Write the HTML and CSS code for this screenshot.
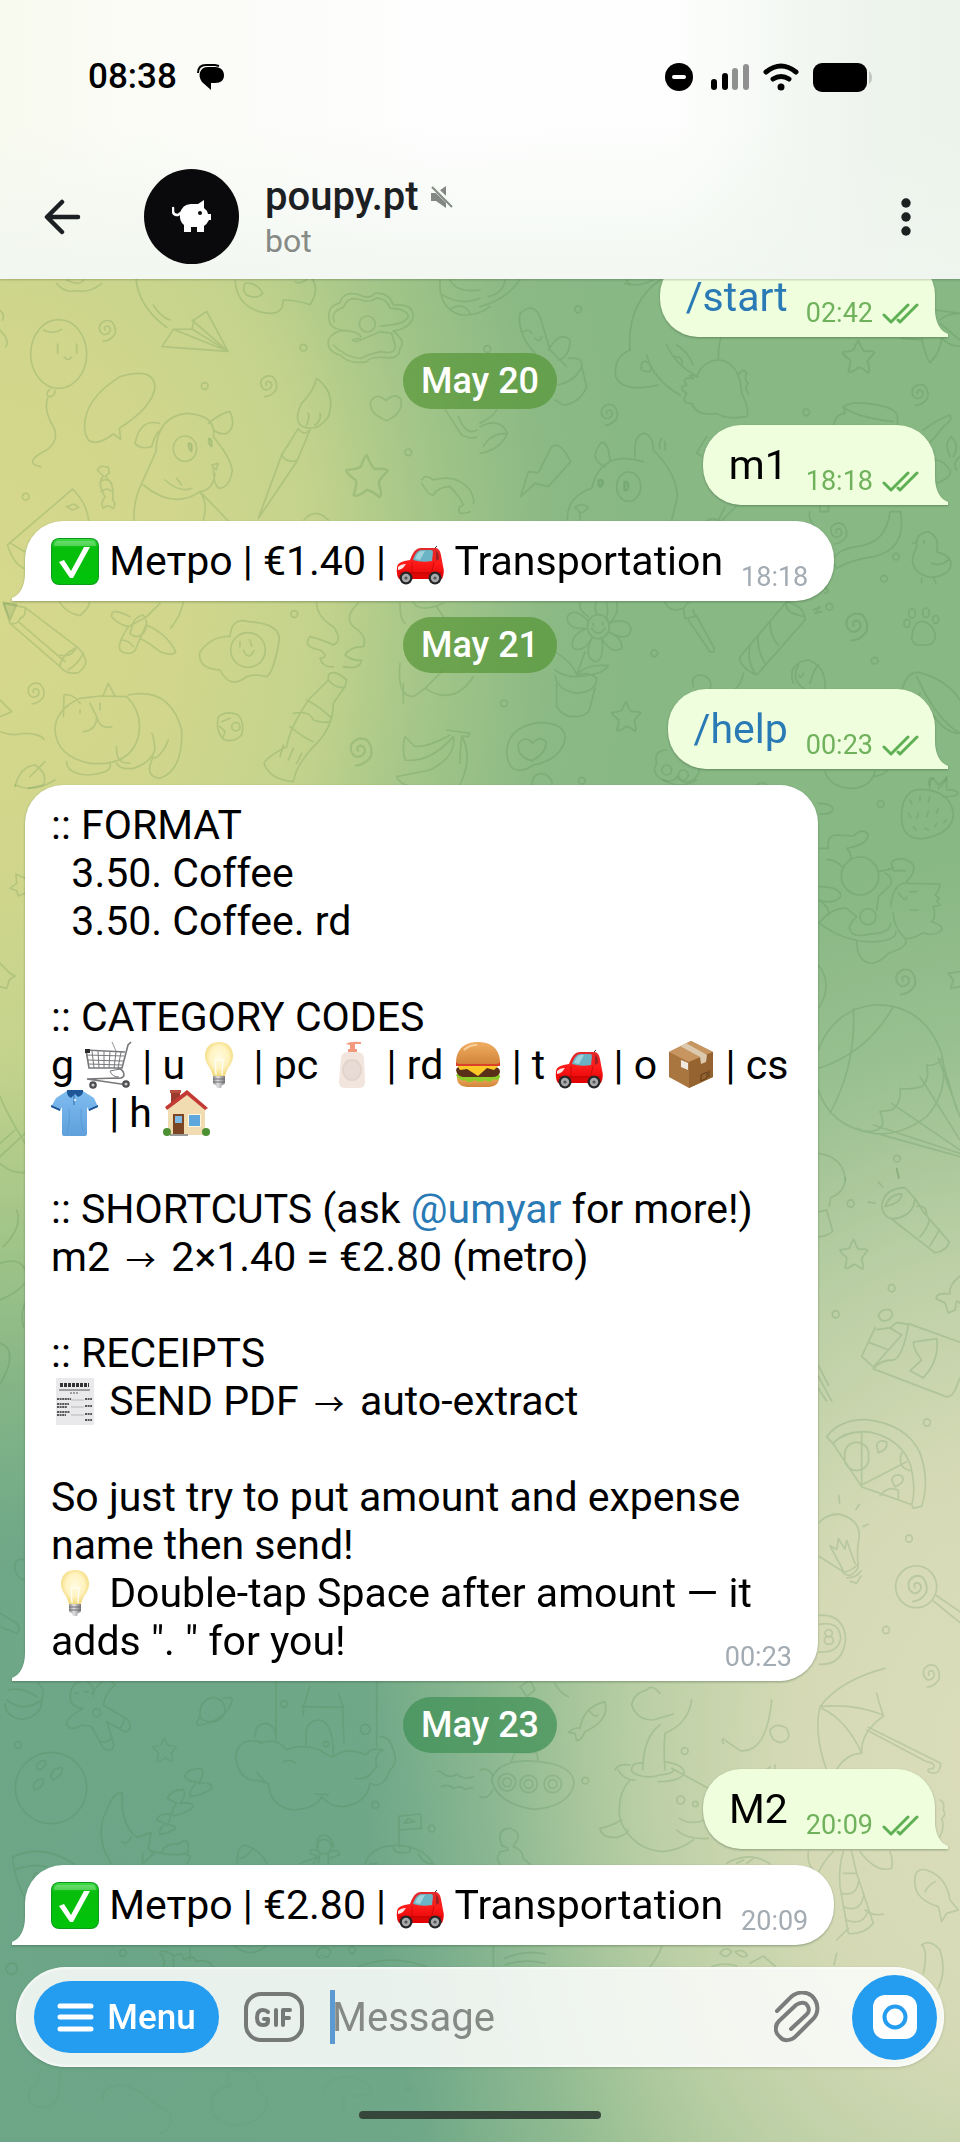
FILE: index.html
```html
<!DOCTYPE html>
<html lang="en">
<head>
    <meta charset="UTF-8">
    <meta name="viewport" content="width=device-width, initial-scale=1.0">
    <title>poupy.pt</title>
    <link rel="stylesheet" href="styles.css">
</head>
<body>
    <!-- emoji sprites -->
    <svg class="sprites" aria-hidden="true">
        <defs>
            <linearGradient id="gGreen" x1="0" y1="0" x2="0" y2="1">
                <stop offset="0" stop-color="#3fd845"/><stop offset=".2" stop-color="#08bd0c"/><stop offset="1" stop-color="#00c40a"/>
            </linearGradient>
            <linearGradient id="gRed" x1="0" y1="0" x2="0" y2="1">
                <stop offset="0" stop-color="#e02a2a"/><stop offset=".5" stop-color="#ff1a1a"/><stop offset="1" stop-color="#e00000"/>
            </linearGradient>
            <radialGradient id="gBulb" cx=".5" cy=".45" r=".55">
                <stop offset="0" stop-color="#fffbe0"/><stop offset=".6" stop-color="#fff3c0"/><stop offset="1" stop-color="#f2d877"/>
            </radialGradient>
            <linearGradient id="gBun" x1="0" y1="0" x2="0" y2="1">
                <stop offset="0" stop-color="#f0ae62"/><stop offset="1" stop-color="#d2853a"/>
            </linearGradient>
            <linearGradient id="gShirt" x1="0" y1="0" x2="0" y2="1">
                <stop offset="0" stop-color="#7fbdf0"/><stop offset="1" stop-color="#5f9fdb"/>
            </linearGradient>
            <linearGradient id="gSteel" x1="0" y1="0" x2="1" y2="0">
                <stop offset="0" stop-color="#8a8a8e"/><stop offset=".4" stop-color="#e2e2e4"/><stop offset="1" stop-color="#77777b"/>
            </linearGradient>
            <symbol id="e-check" viewBox="0 0 48 48">
                <rect x="0" y="1" width="48" height="47" rx="8" fill="#0b9a1c"/>
                <rect x="1" y="2" width="46" height="45" rx="7" fill="url(#gGreen)"/>
                <path d="M6 4H42Q45 5 45 9H3Q3 5 6 4Z" fill="#fff" opacity=".25"/>
                <path d="M8 25 13 23 20 34 33 10H39L22 41H19Z" fill="#fff"/>
            </symbol>
            <symbol id="e-car" viewBox="0 0 48 48">
                <path d="M39 11 41 9" stroke="#333" stroke-width="1"/>
                <path d="M1 31C1 26 6 24 14 23C17 15 20 11 25 11H40Q44 12 45 18L47 29Q49 36 46 42H3Q0 38 1 31Z" fill="url(#gRed)"/>
                <path d="M17 23C19 16 22 13 26 13H35Q37 13 37 15L36 24Q26 26 17 23Z" fill="#69b3c4"/>
                <path d="M19 22C21 17 23 14 26 14H29L24 23Z" fill="#9fd3dc"/>
                <path d="M40 14Q43 15 43 22L40 24Z" fill="#9c2024"/>
                <path d="M2 30Q5 27 10 27L7 31Q4 33 2 33Z" fill="#ffe9e4"/>
                <path d="M4 36H46" stroke="#b50000" stroke-width="1.2"/>
                <path d="M16 25V38H35L38 25" fill="none" stroke="#c40808" stroke-width=".8"/>
                <circle cx="10" cy="41" r="6.500" fill="#262626"/><circle cx="10" cy="41" r="4.2" fill="#a6aaad"/><circle cx="10" cy="41" r="1.6" fill="#555"/>
                <circle cx="39" cy="41" r="6.500" fill="#262626"/><circle cx="39" cy="41" r="4.2" fill="#a6aaad"/><circle cx="39" cy="41" r="1.6" fill="#555"/>
            </symbol>
            <symbol id="e-cart" viewBox="0 0 48 48">
                <g fill="none" stroke="#77787b">
                    <path d="M47 1 44 4 38 27 5 27 2 9 41 11" stroke-width="1.6"/>
                    <path d="M2 14 40 15M3 19 39 20M4 23 38 24M8 10 10 27M14 10 15 27M20 10 20 27M26 10 25 27M32 11 30 27M37 11 34 27" stroke-width="1"/>
                    <path d="M28 1 32 10" stroke-width=".8"/>
                    <path d="M34 27Q40 29 40 34Q39 38 33 37L3 38 44 44" stroke-width="1.6"/>
                    <path d="M36 28 26 30Q28 36 35 36" stroke-width="1"/>
                </g>
                <rect x="1" y="8" width="5" height="4" fill="#2b2b2e"/>
                <circle cx="9" cy="44" r="3.8" fill="#4c4c50"/><circle cx="9" cy="44" r="1.6" fill="#ccc"/>
                <circle cx="42" cy="43" r="3.8" fill="#4c4c50"/><circle cx="42" cy="43" r="1.6" fill="#ccc"/>
            </symbol>
            <symbol id="e-bulb" viewBox="0 0 48 48">
                <path d="M24 1C33 1 38 7 38 15C38 23 32 26 30 35H18C16 26 10 23 10 15C10 7 15 1 24 1Z" fill="url(#gBulb)"/>
                <path d="M21 34 20 19H28L27 34" fill="none" stroke="#fffdf2" stroke-width="1.4"/>
                <path d="M18 35H30V42Q29 44 27 44L26 47H22L21 44Q19 44 18 42Z" fill="url(#gSteel)"/>
                <path d="M18 38H30M18 41H30" stroke="#6f6f73" stroke-width="1"/>
            </symbol>
            <symbol id="e-lotion" viewBox="0 0 48 48">
                <path d="M18 3Q22 0 33 1V3H27V8H29V12H20V8H22V4Z" fill="#f39a7e"/>
                <path d="M13 17Q14 11 20 11H29Q35 11 36 17L37 41Q37 47 31 47H17Q11 47 11 41Z" fill="#f1e5de"/>
                <ellipse cx="24" cy="29" rx="10" ry="11" fill="#e3d3cd"/>
                <ellipse cx="24" cy="29" rx="8" ry="9" fill="#e8dbd5"/>
            </symbol>
            <symbol id="e-burger" viewBox="0 0 48 48">
                <path d="M3 35H45Q46 45 35 46H13Q2 45 3 35Z" fill="url(#gBun)"/>
                <path d="M2 34Q5 30 10 34H40Q46 31 46 36Q44 41 40 38 36 43 31 39 26 43 21 39 15 43 11 39 6 41 2 34Z" fill="#8ccb28"/>
                <path d="M2 29Q3 25 9 26H40Q46 26 46 31Q45 36 38 36H9Q3 35 2 29Z" fill="#5a2f17"/>
                <path d="M3 24H45L40 29 33 27 24 35 13 28 6 29Z" fill="#ffc829"/>
                <path d="M2 21H46V25H2Z" fill="#d9412b"/>
                <path d="M2 20C3 6 13 1 24 1S45 6 46 20Q46 23 42 23H6Q2 23 2 20Z" fill="url(#gBun)"/>
                <path d="M10 9Q15 4 23 4" stroke="#f8cf98" stroke-width="2" fill="none"/>
            </symbol>
            <symbol id="e-box" viewBox="0 0 48 48">
                <path d="M24 0 46 11V36L22 47 2 36V11Z" fill="#a9763f"/>
                <path d="M24 0 46 11 22 21 2 11Z" fill="#c69560"/>
                <path d="M22 21 46 11V36L22 47Z" fill="#94632f"/>
                <path d="M13 5 19 2 40 14 39 21 34 23 33 16Z" fill="#ddc9ae"/>
                <path d="M14 19 21 22V29L14 26Z" fill="#efe9df"/>
                <path d="M34 34 40 31V37L34 40ZM42 29V36" fill="none" stroke="#5e3c1a"/>
            </symbol>
            <symbol id="e-shirt" viewBox="0 0 48 48">
                <path d="M16 2 32 2 43 9 47 18 38 22 36 18V45Q36 47 34 47H13Q11 47 11 45V18L9 22 0 18 5 9Z" fill="url(#gShirt)"/>
                <path d="M16 1H32Q33 6 27 8L24 5 20 9Q15 6 16 1Z" fill="#1d5797"/>
                <path d="M0 16 9 20 9 22 0 18ZM47 16 38 20 38 22 47 18Z" fill="#1c5594"/>
                <path d="M23 6V16" stroke="#2d6aa8"/><circle cx="24" cy="11" r="1" fill="#fff"/>
                <path d="M18 20Q20 32 16 44M30 20Q29 30 32 42" stroke="#4f91cf" fill="none" opacity=".6"/>
            </symbol>
            <symbol id="e-house" viewBox="0 0 48 48">
                <rect x="9" y="2" width="9" height="14" fill="#9d3a2e"/><rect x="8" y="1" width="11" height="3" fill="#b94d3e"/>
                <path d="M6 20 25 4 43 20V46H6Z" fill="#f1dbb0"/>
                <path d="M25 1 46 19 43 21 25 6 5 21 3 18Z" fill="#c23a34"/>
                <rect x="11" y="25" width="11" height="20" fill="#7b4524"/><rect x="13" y="27" width="7" height="7" fill="#7fb9e6"/>
                <rect x="26" y="25" width="13" height="13" fill="#fff5dc"/><rect x="27" y="26" width="11" height="11" fill="#5ea7dd"/>
                <rect x="8" y="45" width="18" height="2" fill="#999"/>
                <circle cx="5" cy="43" r="4" fill="#4d8f33"/><circle cx="44" cy="43" r="4" fill="#4d8f33"/>
            </symbol>
            <symbol id="e-receipt" viewBox="0 0 48 48">
                <rect x="5" y="1" width="38" height="47" rx="1" fill="#e9e9eb"/>
                <path d="M9 8H38" stroke="#333" stroke-width="4" stroke-dasharray="3 1"/>
                <path d="M8 13H39" stroke="#555" stroke-width="1"/>
                <path d="M19 16H28" stroke="#888" stroke-width="1.4" stroke-dasharray="2 1"/>
                <path d="M6 22H20M6 27H18M6 30H16M6 35H19M6 38H15M34 22H41M34 29H41M34 37H41M34 43H41" stroke="#555" stroke-width="1.8" stroke-dasharray="2 .6"/>
                <path d="M20 23H33M20 30H33M20 38H33" stroke="#999" stroke-width=".6"/>
            </symbol>
            <symbol id="i-read" viewBox="0 0 37 21">
                <path d="M2 12 9 19 26 2M16 17 18 19 35 2" fill="none" stroke="currentColor" stroke-width="3" stroke-linecap="round" stroke-linejoin="round"/>
            </symbol>
            <!-- small repeated doodles -->
            <g id="d-dot"><circle r="10"/></g>
            <g id="d-star"><path d="M0 -42Q10 -18 16 -14 40 -16 42 -10 24 8 24 14 32 38 26 42 8 28 0 28 -20 44 -26 38 -18 12 -22 8 -44 -8 -40 -12 -18 -14 -12 -18Q-4 -40 0 -42Z"/></g>
            <g id="d-swirl"><path d="M-3 2Q-8 -8 3 -10 14 -8 13 4 6 18 -8 15 -24 6 -18 -14 -4 -32 16 -24 32 -8 27 14 14 34 -8 36"/></g>
        </defs>
    </svg>

    <div class="phone">
        <!-- wallpaper line art -->
        <svg class="wallpaper" viewBox="0 0 960 2142" preserveAspectRatio="xMidYMin slice" aria-hidden="true">
            <svg x="0" y="270" width="480" height="520" viewBox="0 0 1440 1560" overflow="visible">
                <path d="M170 40Q190 70 230 62 270 70 305 40M200 30Q240 50 250 30M408 25Q415 110 500 172M460 105Q480 140 510 150M0 122Q15 130 8 150M0 180Q30 210 18 230"/>
                <path d="M705 30Q710 110 790 128 850 140 850 90 890 90 930 104 960 60 935 25M735 40Q770 35 788 70 770 90 740 75 725 60 735 40M885 35Q900 45 920 28"/>
                <path d="M92 252A84 103 0 1 1 260 252 84 103 0 0 1 92 252ZM130 180Q160 195 185 178M173 222V250M230 222V248M193 262Q205 275 214 262M150 358Q135 370 145 380 165 380 165 362M143 384Q130 420 160 470 180 510 140 540 80 570 105 585L122 590"/>
                <use href="#d-swirl" x="318" y="178"/><use href="#d-swirl" x="802" y="344"/><use href="#d-swirl" transform="translate(1078 1440) scale(1.3)"/><use href="#d-swirl" x="104" y="1266"/>
                <path d="M486 230 520 178 576 177 582 150 620 124 684 244ZM520 178 684 244 576 150M576 177 684 244 620 124"/>
                <path d="M990 160Q975 110 1020 98 1030 60 1080 75 1105 90 1125 70 1165 65 1180 105 1240 100 1240 140 1230 175 1180 183 1220 215 1200 235 1200 270 1150 262 1110 260 1100 275 1050 285 1020 255 980 245 985 210 1000 180 1040 182Q1000 180 990 160ZM1003 155Q990 125 1030 112 1045 75 1085 90 1105 100 1130 84 1160 85 1170 115 1220 115 1225 140 1215 165 1140 168M1078 162A24 24 0 1 0 1126 162 24 24 0 1 0 1078 162ZM1040 182Q1090 190 1080 205 1040 210 1070 215L1140 185 1175 190 1185 225Q1190 255 1140 245 1100 255 1085 265 1040 265 1000 225"/>
                <path d="M1320 30Q1315 115 1380 134 1430 140 1470 110M1320 70Q1380 110 1440 85M1350 30Q1370 70 1440 60M1355 115Q1390 95 1410 130"/>
                <use href="#d-dot" x="910" y="233"/><use href="#d-dot" x="614" y="348"/><use href="#d-dot" x="1225" y="547"/><use href="#d-dot" x="77" y="680"/><use href="#d-dot" x="883" y="1032"/>
                <path d="M260 430Q280 370 360 320 460 290 465 350 460 410 358 475L362 508 340 492Q290 530 265 510 245 480 260 430Z"/>
                <path d="M468 545Q470 440 560 430 650 435 640 500 690 560 697 600 690 650 660 655 640 650 640 590M468 545 425 640Q400 690 402 750M430 645Q520 720 600 665 640 660 645 610M600 665Q625 700 610 750M605 670 684 752M478 460Q420 445 405 520 420 540 455 530 465 490 482 480M625 460Q670 425 690 425 710 470 680 490 660 495 640 480M520 536A35 38 0 1 0 590 536 35 38 0 1 0 520 536ZM635 585 655 580 648 600ZM495 630Q540 670 575 655M530 625 545 645"/>
                <path d="M565 520Q580 515 575 545 565 540 565 520ZM626 505Q638 505 635 530 624 525 626 505ZM10 997 50 1003 30 1050Z" class="fill"/>
                <path d="M950 325Q940 365 905 400 880 450 905 468 950 490 985 440 1010 370 950 325ZM920 465Q930 440 925 430M945 465Q965 450 960 430M895 475Q910 500 930 480L890 575 775 745 845 555ZM845 555Q860 580 890 572"/>
                <path d="M1160 452Q1105 430 1112 395 1130 365 1158 392 1185 365 1203 388 1210 430 1160 452Z"/>
                <use href="#d-star" transform="translate(1100 618) scale(1.5)"/>
                <path d="M1265 630Q1275 610 1300 630 1370 610 1410 660 1425 690 1420 700M1265 640Q1290 680 1300 675 1315 650 1350 650 1380 680 1390 705 1370 710 1380 730 1400 730 1410 725"/>
                <path d="M1335 418 1385 495Q1420 510 1430 500M1375 440Q1400 500 1430 480"/>
                <path d="M292 600Q300 585 315 590L325 592 328 608 315 620Q345 640 338 690 350 700 340 715 320 700 310 715 300 700 315 680 290 640 310 618ZM300 635Q320 620 335 640M303 665Q320 650 338 665"/>
                <path d="M22 825 218 657Q260 700 266 750M200 710 222 702 236 712 218 720ZM22 825Q40 880 70 895M32 820 82 850"/>
                <path d="M912 750Q945 710 985 750M180 998Q200 1030 240 1037 270 1010 268 998"/>
                <path d="M10 1000 30 1060 180 1190Q200 1215 235 1208 265 1185 255 1165 245 1140 230 1130L75 1012ZM30 1060Q55 1065 60 1045 80 1040 75 1012M55 1055 195 1175M180 1155Q215 1165 230 1130M180 1190Q180 1160 225 1135M205 1200Q235 1180 250 1150"/>
                <path d="M390 1040Q330 1010 335 1040 350 1060 385 1070L440 1040 480 1000M385 1070Q345 1130 365 1145 400 1160 410 1130L438 1065Q500 1090 527 1145 520 1160 480 1145 450 1120 420 1105M395 1075Q400 1040 430 1035 450 1060 430 1090 410 1110 390 1090ZM550 998Q540 1040 512 1075M365 1110Q385 1110 400 1130"/>
                <path d="M600 1145Q640 1095 690 1100 695 1040 745 1055 840 1060 838 1110 820 1210 800 1220 760 1210 740 1220 690 1260 660 1200 590 1195 600 1145ZM692 1140A52 52 0 1 0 796 1140 52 52 0 1 0 692 1140ZM720 1115V1130M750 1110 755 1128M730 1140Q745 1175 762 1142"/>
                <path d="M950 998Q950 1040 1000 1070 1030 1110 1000 1125 970 1110 930 1100 905 1130 960 1140 990 1160 960 1165 970 1195 1000 1190M1075 1000Q1030 1040 1060 1070 1105 1100 1090 1130 1050 1130 1035 1155 1060 1175 1085 1170 1080 1200 1030 1190"/>
                <path d="M985 1215Q1000 1195 1040 1230L1035 1250Q1010 1260 985 1230ZM985 1230 930 1285Q870 1370 860 1430 800 1460 792 1480 810 1530 880 1535 890 1480 950 1420 1000 1370 1000 1300L1035 1250M920 1290Q960 1310 995 1345M880 1330Q930 1320 940 1350 970 1360 990 1355M870 1370Q920 1410 940 1415M850 1425 840 1460M880 1435 865 1470M905 1450 890 1480"/>
                <path d="M165 1380Q165 1320 240 1285L300 1278 380 1280Q430 1330 415 1400 390 1490 270 1480 170 1460 165 1380ZM190 1340 192 1275Q220 1270 240 1300M310 1275 325 1240 345 1278M385 1275Q510 1250 545 1380 550 1500 480 1525 430 1520 460 1460M350 1480Q360 1500 400 1495 450 1480 465 1440 460 1390 455 1390M465 1465Q490 1450 505 1410M200 1475Q200 1510 260 1515 340 1510 330 1480M240 1320V1330M270 1300 290 1340Q290 1380 250 1385M290 1340Q300 1380 335 1370M300 1300V1320M350 1430Q345 1480 390 1480"/>
                <path d="M655 1340Q680 1320 715 1335 735 1360 725 1395 700 1420 670 1408 645 1380 655 1340ZM695 1370A12 12 0 1 0 720 1370 12 12 0 1 0 695 1370ZM665 1355 690 1345M660 1370 675 1385 670 1400"/>
                <path d="M1340 1380 1410 1390 1405 1400 1385 1398Q1420 1460 1380 1545M1350 1395Q1290 1430 1245 1430L1215 1400Q1205 1430 1215 1470 1290 1480 1360 1400 1370 1460 1290 1500L1190 1520Q1200 1545 1240 1550M1385 1400Q1380 1440 1380 1480"/>
                <path d="M1200 1180Q1190 1280 1240 1280L1275 1255 1330 1200M1275 1255Q1360 1310 1420 1220M1210 1240V1300M1200 1000Q1200 1050 1215 1060M1240 998Q1260 1030 1330 1000M1310 1010 1330 1040"/>
                <path d="M45 1550Q60 1490 105 1485 145 1510 130 1545L85 1555M90 1520 135 1475M0 1385Q40 1400 70 1390 120 1390 132 1408M0 1290 35 1325 0 1340"/>
            </svg>
            <svg x="480" y="270" width="480" height="520" viewBox="0 0 1440 1560" overflow="visible">
                <path d="M0 110Q80 90 120 28M25 80Q70 70 75 30M440 30Q450 60 520 30M540 30Q440 100 450 240M435 40 450 45"/>
                <path d="M120 130Q160 95 180 140L210 240 260 290M120 130Q110 190 165 250M205 240Q240 180 270 210 270 260 235 270M265 265Q310 260 305 290L320 350Q300 400 250 405L225 390M305 290Q290 330 235 345M130 185Q145 175 155 190M165 205Q180 220 185 200"/>
                <use href="#d-dot" x="294" y="118"/><use href="#d-dot" x="22" y="237"/><use href="#d-dot" x="979" y="427"/><use href="#d-dot" x="1248" y="860"/><use href="#d-dot" x="1212" y="926"/><use href="#d-dot" x="1048" y="1010"/><use href="#d-dot" x="523" y="1150"/><use href="#d-dot" x="1184" y="1172"/><use href="#d-dot" x="72" y="1300"/><use href="#d-dot" x="305" y="1532"/>
                <path d="M450 240Q400 260 407 320 430 370 535 345M500 255Q520 330 600 375M485 300Q480 270 500 275 520 285 510 305 490 305 485 300M560 225Q590 290 655 320M585 260Q610 260 605 285M650 320Q670 270 720 270 780 280 785 370 810 420 800 440 740 450 710 430 650 440 635 400 600 400 620 370 590 350 620 345 600 320 640 325Q615 310 650 320ZM640 285Q620 240 590 225M715 265Q715 230 722 205M775 315Q790 290 800 310 790 330 805 340 790 350 805 370 780 375M805 340 850 300Q890 270 920 275 945 300 910 330L835 372Q1000 380 1005 270 980 210 890 210M890 245V275M698 335Q705 400 715 335M750 345Q755 370 765 340M665 385Q700 430 760 430"/>
                <use href="#d-star" transform="translate(1135 260) scale(1.15)"/><use href="#d-star" transform="translate(438 1340) scale(1.05)"/>
                <use href="#d-swirl" x="384" y="430"/><use href="#d-swirl" x="1316" y="370"/><use href="#d-swirl" x="1072" y="786"/><use href="#d-swirl" transform="translate(1125 1065) scale(1.3)"/>
                <path d="M1365 120 1440 130M1380 150Q1400 130 1440 130M1380 160 1440 210M1325 205Q1340 270 1350 278 1380 250 1385 205M1265 205 1330 210M1385 205Q1410 230 1440 228"/>
                <path d="M122 680 145 605 175 608 215 530Q240 510 272 575L205 650 165 640Z"/>
                <path d="M0 460Q40 440 50 420M0 470Q60 440 82 490 60 540 0 550M82 490Q30 490 10 530"/>
                <path d="M262 750Q260 680 335 655 350 590 400 570 440 560 490 575M375 590Q330 570 355 530 370 500 385 540L390 570M465 560Q460 490 495 490 520 500 520 540 590 610 592 680L575 750M410 650A36 44 0 1 0 482 650 36 44 0 1 0 410 650ZM300 750V728M285 712Q305 695 325 712 310 730 300 728ZM545 505Q535 520 540 535M555 515 555 540"/>
                <path d="M355 630Q370 625 370 640 360 660 355 645ZM432 635Q445 630 446 650 440 668 432 660Z" class="fill"/>
                <path d="M1060 465Q1070 430 1095 430L1090 410Q1110 395 1160 400 1250 410 1253 440L1252 465M1090 410Q1120 440 1240 455M680 500Q660 530 650 550L670 560M1330 480Q1370 450 1410 435 1420 450 1390 470 1360 510 1345 520"/>
                <path d="M1365 570Q1390 570 1410 600 1420 620 1370 640M1410 560Q1390 520 1415 500 1440 530 1420 560M1430 600Q1415 580 1440 560"/>
                <path d="M680 752Q700 740 715 752L735 710M725 752 770 708M1020 708V725H1045V708M990 725Q980 750 1020 790"/>
                <path d="M1230 725H1262Q1280 840 1180 860 1110 870 1070 895L1055 870Q1080 835 1130 830 1220 820 1230 725Z"/>
                <path d="M1310 830Q1305 790 1345 785 1380 800 1370 845 1420 860 1412 890 1400 920 1350 922 1300 910 1297 870 1300 850 1310 830ZM1297 820 1312 815M1325 925V938M1360 922 1368 940M1355 880Q1380 890 1405 870M1332 812V820"/>
                <path d="M1295 1105Q1300 1050 1330 1055 1355 1060 1365 1090 1370 1130 1325 1125 1300 1130 1295 1105ZM1272 1060A9 12 0 1 0 1290 1060 9 12 0 1 0 1272 1060ZM1286 1030A10 14 0 1 0 1306 1030 10 14 0 1 0 1286 1030ZM1328 1028A10 14 0 1 0 1348 1028 10 14 0 1 0 1328 1028ZM1358 1048A9 12 0 1 0 1376 1048 9 12 0 1 0 1358 1048Z"/>
                <path d="M322 1070A33 36 0 1 0 388 1070 33 36 0 1 0 322 1070ZM340 1060V1068M368 1058V1066M335 1075Q355 1105 375 1075M322 1050Q280 1010 262 1040 260 1080 320 1075 265 1100 280 1135 310 1150 335 1105 310 1160 345 1175 375 1170 365 1105 395 1155 425 1135 430 1105 385 1085 450 1120 453 1075 440 1040 388 1060 420 1030 410 998M325 1040Q295 1020 300 1000M350 1030Q340 1010 350 998M380 1045Q385 1020 380 998"/>
                <path d="M315 1145 290 1215Q280 1180 225 1145M290 1215Q320 1180 385 1187 370 1215 290 1220 250 1220 225 1200M225 1215Q230 1260 290 1270 350 1265 350 1225 320 1200 290 1220M230 1240V1310Q250 1340 280 1340 320 1340 328 1320L345 1255"/>
                <path d="M555 998Q570 1030 610 1015 620 1000 625 998M610 1015 615 1045 645 1040 640 1020M625 1050 690 1145Q705 1150 703 1135L648 1035"/>
                <path d="M920 995 780 1160Q775 1190 830 1215L975 1050Q975 1010 920 995ZM920 995Q910 1030 975 1040M870 1055Q870 1100 895 1125M835 1095Q830 1140 855 1180M810 1130Q800 1170 825 1210M790 1210Q785 1240 765 1258M1000 1020 1020 1010 1005 1030 1025 1025M1030 945Q1050 940 1035 955 1055 960 1035 970"/>
                <path d="M640 1250Q630 1215 665 1215 700 1225 690 1258M940 1240Q920 1180 985 1170 1040 1190 1035 1258M955 1185Q930 1230 975 1258M955 1215Q965 1230 970 1210M1015 1185Q1000 1200 990 1240"/>
                <path d="M1265 1265Q1280 1200 1320 1208 1400 1230 1440 1290M1310 1220Q1370 1350 1440 1390M1350 1320Q1390 1390 1440 1390M1320 1270 1315 1280"/>
                <path d="M80 1450Q80 1370 180 1357 260 1360 255 1410 240 1470 160 1485 90 1530 80 1450ZM155 1472Q110 1460 115 1420 140 1395 157 1420 180 1395 198 1415 200 1450 155 1472ZM155 1545Q160 1500 200 1515 220 1530 215 1548"/>
                <path d="M560 1440Q520 1440 530 1480 510 1510 550 1530 580 1540 590 1520 610 1545 640 1530 670 1500 650 1480M545 1500A15 15 0 1 0 575 1500 15 15 0 1 0 545 1500ZM595 1515A15 15 0 1 0 625 1515 15 15 0 1 0 595 1515Z"/>
                <path d="M1035 1505Q1050 1550 1110 1555 1170 1555 1185 1505M1180 1520Q1210 1515 1220 1503M1350 1555Q1340 1520 1360 1525L1375 1545 1400 1525V1555"/>
            </svg>
            <svg x="480" y="780" width="480" height="400" viewBox="0 0 1440 1200" overflow="visible">
                <path d="M1015 70Q1060 70 1058 90 1050 105 1020 102M1265 100Q1270 30 1320 28 1410 30 1420 100 1420 160 1330 176 1260 180 1265 100ZM1350 15Q1350 0 1360 -5M1375 25Q1395 10 1400 -10M1390 50Q1430 50 1435 40 1420 25 1400 30M1290 60 1296 72M1320 50V62M1350 50 1345 65M1285 100 1292 112M1315 100 1310 115M1345 95 1340 110M1375 85 1370 100M1300 140 1308 150M1335 145 1345 150M1370 130 1365 140M1400 120 1392 128"/>
                <use href="#d-dot" x="1202" y="72"/><use href="#d-dot" x="1251" y="1136"/>
                <path d="M1018 205H1045Q1040 165 1070 165L1120 168Q1150 140 1165 165 1160 195 1100 205 1115 220 1112 238M1040 238Q1070 240 1088 262M1084 288A55 56 0 1 0 1196 288 55 56 0 1 0 1084 288ZM1196 275 1240 265Q1220 240 1265 236 1330 250 1280 305M1240 272H1275M1232 380Q1240 300 1290 310L1380 312Q1380 330 1365 345L1378 355 1370 362 1380 375 1360 380Q1370 410 1355 425 1400 440 1380 455 1360 470 1330 458 1290 480 1275 475 1240 440 1240 400M1215 280Q1240 290 1232 315L1195 350 1190 390M1255 340Q1280 370 1280 350M1290 335H1310M1290 390H1315M1015 320Q1085 320 1082 350 1060 375 1015 360M1015 430Q1060 380 1100 385L1130 410Q1100 440 1110 450 1120 475 1170 462 1230 460 1232 430M1018 430Q1100 490 1190 485 1250 480 1248 455M1140 410A24 24 0 1 0 1188 410 24 24 0 1 0 1140 410ZM1130 480Q1130 550 1180 550 1210 540 1225 520 1290 500 1275 475M1015 360Q1050 380 1045 405"/>
                <use href="#d-swirl" transform="translate(1272 600) scale(1.2)"/>
                <path d="M1015 555Q1060 610 1018 682M1440 575 1405 580 1420 600 1412 625 1440 620"/>
                <path d="M1015 810Q1060 690 1180 675 1330 670 1385 820 1410 930 1340 1010 1260 1070 1180 1060 1050 1040 1015 930M1120 685Q1130 850 1050 1000M1240 680Q1160 820 1015 865M1385 835Q1370 860 1340 855 1350 900 1325 920 1290 930 1260 925 1265 970 1235 990L1200 995Q1220 1040 1190 1050 1160 1060 1130 1045M1375 835 1440 1010M1320 890 1440 1080M1235 970 1440 1110M1180 1035 1440 1120M1190 1060 1440 1130M1385 835 1430 990"/>
                <path d="M1250 1165 1256 1195M1015 1120Q1090 1130 1096 1200"/>
                <path d="M550 0Q600 30 650 0M830 15Q850 0 860 15" />
            </svg>
            <svg x="480" y="1160" width="480" height="560" viewBox="0 0 1440 1568" preserveAspectRatio="none" overflow="visible">
                <path d="M1096 50Q1095 90 1052 105L1048 130M1015 145 1040 140 1058 200Q1040 215 1015 215M1195 62 1208 75M1165 118 1185 121M1250 25 1257 50"/>
                <use href="#d-dot" x="1112" y="122"/><use href="#d-dot" x="1235" y="359"/><use href="#d-dot" x="1067" y="432"/><use href="#d-dot" x="1341" y="735"/><use href="#d-dot" x="1287" y="1060"/><use href="#d-dot" x="1218" y="1316"/>
                <path d="M1205 130Q1210 80 1275 77L1305 108Q1300 160 1235 165 1210 160 1205 130ZM1215 130Q1230 95 1265 95 1265 120 1215 130ZM1235 165 1365 260Q1400 255 1408 230L1330 145 1305 108M1310 130Q1340 125 1340 155M1320 215Q1345 190 1348 165M1350 240Q1370 210 1378 195"/>
                <use href="#d-star" x="1121" y="264"/>
                <path d="M1440 325Q1405 350 1410 375 1370 370 1368 388L1395 400 1405 428 1425 420 1430 395 1440 400M1195 435Q1205 415 1230 420 1245 430 1230 445 1205 460 1195 435ZM1185 470 1145 550 1180 580 1265 490M1190 475 1230 470 1250 455 1285 460Q1270 550 1240 560 1200 560 1180 585L1390 660Q1410 670 1425 645L1440 610M1285 458 1440 510M1230 470 1265 490M1165 510 1220 530M1300 510 1370 500Q1380 560 1330 610L1290 590 1325 560Q1300 530 1300 510M1015 575 1045 630M1015 605 1055 675M1015 640 1040 675"/>
                <path d="M1040 775Q1080 725 1160 727 1280 740 1320 820 1350 900 1325 970L1300 975 1295 965 1145 915 1060 795ZM1060 792Q1100 755 1170 762 1260 780 1290 850 1310 920 1295 965M1145 765V910L1280 845M1095 830A36 32 0 1 0 1165 830 36 32 0 1 0 1095 830ZM1190 800Q1195 780 1220 790 1225 810 1195 820ZM1235 895Q1245 875 1265 885 1280 900 1245 915ZM1200 940Q1225 910 1255 925L1255 950M1265 820Q1250 860 1290 870"/>
                <path d="M1018 1015Q1040 990 1080 992 1150 1010 1135 1070 1130 1100 1135 1140 1110 1180 1085 1150L1018 1110M1090 1150 1050 1080 1070 1090 1075 1060 1095 1090 1100 1065 1125 1130M1088 1155Q1120 1150 1135 1130M1100 1170Q1130 1170 1143 1150M1110 1180 1130 1185 1143 1165M1076 940 1079 960M1138 965 1128 978M1165 1020 1150 1026"/>
                <path d="M1247 1195A61 58 0 1 0 1370 1195 61 58 0 1 0 1247 1195ZM1360 1235 1440 1295M1370 1220 1440 1265"/>
                <use href="#d-swirl" transform="translate(1308 1195) scale(1.15)"/><use href="#d-swirl" x="1350" y="1440"/>
                <path d="M1018 1275Q1090 1270 1097 1340 1090 1415 1018 1412M1018 1300Q1080 1290 1082 1340 1075 1380 1018 1378M1035 1325A11 10 0 1 0 1057 1325 11 10 0 1 0 1035 1325ZM1033 1345A13 11 0 1 0 1060 1345 13 11 0 1 0 1033 1345Z"/>
            </svg>
            <svg x="0" y="780" width="480" height="900" viewBox="0 0 1440 2700" overflow="visible">
                <path d="M45 15Q100 40 165 0M75 295 48 282 50 310 30 325 50 332 55 348 75 340M0 550 30 580 45 588 28 600 20 625 0 620M0 950Q20 1000 75 1090M0 1090 45 1050M0 1130 75 1060M0 1150Q30 1180 75 1178M50 1290Q70 1340 10 1400M0 1450Q60 1430 75 1470M0 1560Q50 1540 75 1510M75 1570Q60 1600 70 1640M0 1690Q40 1700 25 1760 10 1800 0 1810M75 2340Q40 2330 45 2370 55 2400 75 2400M0 2500 50 2530Q65 2550 50 2560L0 2540"/>
            </svg>
            <svg x="0" y="1700" width="480" height="442" viewBox="0 0 1440 1326" overflow="visible">
                <path d="M15 10Q15 50 65 58 120 50 125 10L130 -30 115 -50M20 0Q70 40 125 0M25 -30Q70 -40 110 -10M210 0Q220 25 250 25L225 40Q195 60 200 75 215 95 245 75L275 80 310 145Q335 160 342 135L320 65 375 95Q400 90 385 60L310 15Q320 -30 345 -45 330 -70 300 -50L275 -20M212 0Q205 -50 250 -60 285 -50 280 -10M278 38A12 12 0 1 0 302 38 12 12 0 1 0 278 38ZM225 -20H235M255 -25H265M600 40Q600 0 640 -8 680 0 675 40 650 80 610 60 600 60 600 40ZM600 50Q580 80 600 75 680 60 697 0 695 -12 670 -5M300 125Q320 130 335 115M360 85Q370 75 372 60"/>
                <use href="#d-dot" x="54" y="135"/><use href="#d-dot" x="852" y="12"/><use href="#d-dot" x="1126" y="315"/><use href="#d-dot" x="1295" y="386"/><use href="#d-dot" x="369" y="759"/><use href="#d-dot" x="1056" y="750"/><circle cx="35" cy="806" r="17"/><circle cx="1096" cy="88" r="15"/>
                <circle cx="153" cy="264" r="107"/>
                <path d="M110 205Q110 180 135 182 145 195 120 210ZM152 230Q155 205 185 202 195 220 160 240ZM100 260Q105 235 130 238 130 265 105 270Z"/>
                <use href="#d-star" transform="translate(493 150) scale(.85)"/>
                <path d="M828 -60V120M910 45V20L930 -40M905 20 1030 22 1015 -20M1028 25 1032 130M1130 -60V140M918 140V100Q920 60 960 60 1000 70 1000 165M970 132A8 8 0 1 0 986 132 8 8 0 1 0 970 132ZM765 110Q765 70 800 70 830 80 828 120M780 130Q830 110 860 150 900 130 960 150 985 170 1000 170 1040 140 1100 165 1110 140 1150 150 1120 160 1130 200 1100 245 1065 235M800 250Q790 240 770 215M780 125Q710 110 707 175 720 245 775 242L805 250Q810 320 880 330 950 325 965 290 990 320 1030 320 1100 310 1110 250 1150 270 1170 210 1195 190 1180 150 1170 110 1140 110M850 185Q870 175 888 190M945 282 985 284"/>
                <path d="M555 230Q560 205 605 206 615 225 595 250 640 245 635 265 610 285 570 290 565 275 590 245 560 245 555 230ZM502 295Q510 270 550 268 560 285 540 310 580 305 580 320 560 340 520 348 510 335 530 310ZM470 360Q475 340 510 342 515 355 500 375 530 375 525 388 505 400 480 403 475 390 495 370Z"/>
                <path d="M335 492Q280 410 320 330 345 270 367 280 360 370 410 412L453 398 445 445 460 462 428 490V460M365 425Q380 440 394 410M485 460Q490 430 540 430 560 410 565 435L562 465 572 470 560 492M460 455Q520 470 562 460M40 470Q130 430 222 492M38 470Q40 530 75 595M45 510Q90 490 140 500M100 530Q105 515 112 520M712 490Q710 430 740 437 780 450 802 492M718 475Q740 475 758 445M900 490 955 470 940 490M955 440Q945 410 970 405 1000 410 1000 440M950 440A22 22 0 1 0 994 440 22 22 0 1 0 950 440ZM960 460 955 490M985 462V490M955 455Q930 440 930 460L955 470M990 455Q1020 445 1018 465L990 475"/>
                <path d="M1197 440V348L1262 342 1264 385 1200 390M1212 370 1225 355 1245 365ZM1095 492Q1110 440 1190 435 1270 440 1300 492M1180 440Q1180 460 1210 458 1235 460 1230 440M1255 462Q1270 490 1295 492M1110 492 1130 490"/>
                <path d="M1312 215Q1320 210 1335 225 1355 235 1370 222 1390 240 1420 230M1325 260Q1345 250 1360 265 1385 255 1395 268L1418 262M480 755Q510 750 520 770 550 750 550 780 580 760 590 785 620 775 640 800M480 760Q500 780 490 800M570 745V780M520 775V800M700 735Q750 780 802 735M960 775Q940 760 960 745 990 735 992 760 980 780 965 765M1075 800Q1170 760 1280 800"/>
                <g class="faint">
                    <path d="M120 1110Q120 1150 95 1160 70 1200 110 1220 160 1230 175 1190 180 1150 180 1110M310 1200Q300 1160 360 1155 410 1160 450 1200L510 1240Q520 1290 480 1300M640 1190Q650 1160 690 1160 660 1110 720 1110 780 1120 770 1170 820 1190 790 1240 730 1300 660 1260 620 1240 640 1190ZM970 1180Q980 1130 1050 1130 1110 1140 1118 1180L1060 1190M1030 1185V1240"/>
                    <use href="#d-dot" x="1225" y="1162"/>
                </g>
            </svg>
            <svg x="480" y="1700" width="480" height="442" viewBox="0 0 1440 1326" overflow="visible">
                <path d="M265 98Q285 80 300 85 310 20 375 5 390 60 315 95 305 120 290 122L285 100ZM330 35Q345 55 355 45M120 -40 150 -60 165 -30 140 -10ZM225 -50Q240 -20 265 -10"/>
                <path d="M455 15Q460 -20 500 -30 515 -50 540 -20M455 15Q470 60 520 60L580 42M635 0Q625 70 555 100 550 150 555 210M540 75Q490 110 488 210M455 215Q450 185 490 190M555 185Q620 195 610 225 590 245 535 245M455 215Q490 240 540 225 580 220 582 210M405 210Q415 190 450 195M415 210Q430 240 465 240M450 240Q410 280 420 360 460 450 550 455 600 450 640 420M425 360Q390 380 360 385 365 415 410 412 440 405 445 390M575 205 685 265M598 355Q630 375 668 362M590 300A12 12 0 1 0 614 300 12 12 0 1 0 590 300ZM638 312A8 8 0 1 0 654 312 8 8 0 1 0 638 312ZM590 390Q620 420 685 415"/>
                <path d="M730 130Q720 105 745 128L780 152Q860 160 875 0M870 90Q890 65 920 85 940 120 900 128 870 120 870 90M860 210 870 200M885 195V210"/>
                <use href="#d-dot" x="614" y="153"/><use href="#d-dot" x="316" y="242"/>
                <path d="M1020 20Q1000 100 1040 210M1020 20Q1120 10 1210 45 1200 20 1190 -20M1020 20Q1080 -60 1215 -95M1025 25Q1100 60 1145 160 1140 100 1210 48M1145 160Q1100 160 1070 208M1160 90 1340 185Q1370 190 1360 205 1340 205 1345 215 1380 230 1382 190L1165 82"/>
                <path d="M35 240Q50 180 155 183 280 190 282 250 270 320 160 328 50 310 35 240ZM93 185 105 158H170L175 185M0 210Q30 200 38 230M0 290Q25 300 38 270M55 247A26 26 0 1 0 107 247 26 26 0 1 0 55 247ZM68 247A13 13 0 1 0 94 247 13 13 0 1 0 68 247ZM120 252A26 26 0 1 0 172 252 26 26 0 1 0 120 252ZM133 252A13 13 0 1 0 159 252 13 13 0 1 0 133 252ZM192 252A26 26 0 1 0 244 252 26 26 0 1 0 192 252ZM205 252A13 13 0 1 0 231 252 13 13 0 1 0 205 252Z"/>
                <path d="M60 410Q60 385 90 385 130 400 105 430L100 440Q130 450 130 475L150 492M60 410Q60 440 75 440 100 450 60 455 45 480 60 492M740 490Q810 450 870 492M770 490 790 480M800 490 820 475"/>
                <path d="M1090 455Q1075 500 1080 560L1105 700Q1150 705 1180 670L1130 520 1115 455M1090 520H1130M1085 580Q1130 590 1135 545M1090 620Q1140 640 1150 590M1100 660Q1150 680 1165 630M1060 455Q1030 480 1005 540M1140 455Q1190 520 1235 505 1240 480 1230 455M1000 510Q980 490 985 455M1155 630Q1180 650 1210 642M1105 685 1070 720"/>
                <path d="M1305 555Q1300 500 1340 510 1400 530 1410 600L1435 630 1400 640 1385 665 1375 620Q1310 600 1305 555ZM1335 575Q1345 555 1365 545M1380 300Q1395 305 1390 330 1400 345 1385 355 1395 380 1380 410"/>
                <path d="M40 740V800M75 775Q130 750 195 762M75 795Q130 775 195 790M510 800Q535 770 545 740M720 760Q735 735 755 755 740 780 720 760ZM765 755Q790 745 802 765 790 780 765 755ZM810 790 850 768 885 798M695 800Q730 785 770 798M1062 795 1070 760M1330 820Q1345 750 1325 735 1350 715 1380 750 1400 810 1375 865"/>
            </svg>
        </svg>

        <header class="top">
            <div class="status">
                <div class="status-left">
                    <span class="clock">08:38</span>
                    <svg width="28" height="28" viewBox="0 0 28 28" aria-hidden="true">
                        <path d="M11 4H18C24 4 27 8 27 12.500S24 20 18 20H14V27L5 19C0 12 3 4 11 4Z"/>
                        <path d="M1 10C1 5 4 2 9 2H18L22 3" fill="none" stroke="#000" stroke-width="2"/>
                    </svg>
                </div>
                <div class="status-right">
                    <svg width="28" height="28" viewBox="0 0 28 28" aria-hidden="true">
                        <circle cx="14" cy="14" r="14"/><rect x="7" y="12" width="14" height="4" rx="2" fill="#fff"/>
                    </svg>
                    <svg class="signal" width="38" height="28" viewBox="0 0 38 28" aria-hidden="true">
                        <rect x="0" y="16" width="6" height="11" rx="3"/><rect x="11" y="10" width="6" height="17" rx="3"/>
                        <rect x="21" y="5" width="6" height="22" rx="3" fill="#909090"/><rect x="32" y="1" width="6" height="26" rx="3" fill="#909090"/>
                    </svg>
                    <svg width="36" height="28" viewBox="0 0 36 28" aria-hidden="true">
                        <path d="M3 9Q18 -3 33 9M10 16Q18 11 26 16" fill="none" stroke="#000" stroke-width="5" stroke-linecap="round"/>
                        <circle cx="18" cy="24" r="3.500"/>
                    </svg>
                    <svg width="59" height="29" viewBox="0 0 59 29" aria-hidden="true">
                        <rect width="54" height="29" rx="9"/><path d="M56 8Q59 10 59 14.500T56 21Z" fill="#c2c7c2"/>
                    </svg>
                </div>
            </div>
            <div class="appbar">
                <button class="icon-btn" aria-label="Back">
                    <svg width="38" height="36" viewBox="0 0 38 36">
                        <path d="M34 18H4M18 3 3 18 18 33" fill="none" stroke="#1d2023" stroke-width="4.500" stroke-linecap="round" stroke-linejoin="round"/>
                    </svg>
                </button>
                <div class="avatar">
                    <svg width="40" height="33" viewBox="0 0 40 33" aria-hidden="true">
                        <path d="M1 8V11Q1 15 6 15L10 12" fill="none" stroke="#fff" stroke-width="2.500" stroke-linecap="round"/>
                        <path d="M8 14Q10 4 19 4H26L32 0V8Q35 10 36 14H39V20H37Q35 24 32 26V32H25V27H19V32H12V25Q7 21 8 14Z" fill="#fff"/>
                        <circle cx="28" cy="13" r="2" fill="#0a0a0c"/>
                    </svg>
                </div>
                <div class="peer">
                    <h1 class="peer-name">poupy.pt
                        <svg width="22" height="24" viewBox="0 0 22 24" aria-hidden="true">
                            <path d="M0 8H5L15 1V23L5 16H0Z" fill="#848884"/>
                            <path d="M1 1 21 20" stroke="#f6faf4" stroke-width="5"/><path d="M1 2 21 22" stroke="#848884" stroke-width="2"/>
                        </svg>
                    </h1>
                    <div class="peer-status">bot</div>
                </div>
                <button class="icon-btn" aria-label="More">
                    <svg width="10" height="38" viewBox="0 0 10 38" fill="#1b2020">
                        <circle cx="5" cy="5" r="4.700"/><circle cx="5" cy="19" r="4.700"/><circle cx="5" cy="33" r="4.700"/>
                    </svg>
                </button>
            </div>
        </header>

        <main class="chat">
            <div class="bubble out">
                <p class="text"><a href="#">/start</a></p>
                <div class="meta">02:42 <svg class="read" aria-label="Read"><use href="#i-read"/></svg></div>
            </div>

            <div class="date">May 20</div>
            <div class="bubble out">
                <p class="text">m1</p>
                <div class="meta">18:18 <svg class="read" aria-label="Read"><use href="#i-read"/></svg></div>
            </div>
            <div class="bubble in">
                <p class="text"><svg class="emoji"><use href="#e-check"/></svg> Метро | €1.40 | <svg class="emoji"><use href="#e-car"/></svg> Transportation</p>
                <div class="meta">18:18</div>
            </div>

            <div class="date">May 21</div>
            <div class="bubble out">
                <p class="text"><a href="#">/help</a></p>
                <div class="meta">00:23 <svg class="read" aria-label="Read"><use href="#i-read"/></svg></div>
            </div>
            <div class="bubble in long">
                <div class="text">
                    <p>:: FORMAT<br>&nbsp; 3.50. Coffee<br>&nbsp; 3.50. Coffee. rd</p>
                    <p>:: CATEGORY CODES<br>
                        g <svg class="emoji"><use href="#e-cart"/></svg> | u <svg class="emoji"><use href="#e-bulb"/></svg> | pc <svg class="emoji"><use href="#e-lotion"/></svg> | rd <svg class="emoji"><use href="#e-burger"/></svg> | t <svg class="emoji"><use href="#e-car"/></svg> | o <svg class="emoji"><use href="#e-box"/></svg> | cs <svg class="emoji"><use href="#e-shirt"/></svg> | h <svg class="emoji"><use href="#e-house"/></svg></p>
                    <p>:: SHORTCUTS (ask <a href="#">@umyar</a> for more!)<br>m2 <span class="arrow">→</span> 2×1.40 = €2.80 (metro)</p>
                    <p>:: RECEIPTS<br><svg class="emoji"><use href="#e-receipt"/></svg> SEND PDF <span class="arrow">→</span> auto-extract</p>
                    <p>So just try to put amount and expense name then send!<br><svg class="emoji"><use href="#e-bulb"/></svg> Double-tap Space after amount — it adds ". " for you!</p>
                </div>
                <div class="meta">00:23</div>
            </div>

            <div class="date date-low">May 23</div>
            <div class="bubble out">
                <p class="text">M2</p>
                <div class="meta">20:09 <svg class="read" aria-label="Read"><use href="#i-read"/></svg></div>
            </div>
            <div class="bubble in">
                <p class="text"><svg class="emoji"><use href="#e-check"/></svg> Метро | €2.80 | <svg class="emoji"><use href="#e-car"/></svg> Transportation</p>
                <div class="meta">20:09</div>
            </div>
        </main>

        <form class="composer">
            <button type="button" class="menu-btn">
                <svg width="37" height="29" viewBox="0 0 37 29" aria-hidden="true">
                    <path d="M3 3H34M3 14H34M3 26H34" stroke="#fff" stroke-width="5" stroke-linecap="round"/>
                </svg>
                Menu
            </button>
            <button type="button" class="icon-btn" aria-label="GIF">
                <svg width="60" height="50" viewBox="0 0 60 50">
                    <rect x="2" y="2" width="56" height="46" rx="15" fill="none" stroke="#757a78" stroke-width="4"/>
                    <path d="M24 20Q22 18 19 18 13 18 13 25.500T19 33Q24 33 24 29V27H20M32 18V33M39 33V18H46M39 26H45" fill="none" stroke="#757a78" stroke-width="4" stroke-linecap="round" stroke-linejoin="round"/>
                </svg>
            </button>
            <label class="field">
                <input type="text" placeholder="Message" aria-label="Message">
            </label>
            <button type="button" class="icon-btn" aria-label="Attach">
                <svg width="46" height="52" viewBox="0 0 46 52">
                    <path d="M3 20 15 8C22 0 32 0 38 5 45 12 45 22 39 28L23 44C17 51 9 50 6 46 0 41 1 34 5 30L22 14C26 11 31 11 33 14 36 18 35 22 32 24L17 38" fill="none" stroke="#7a7d7b" stroke-width="4" stroke-linecap="round" stroke-linejoin="round"/>
                </svg>
            </button>
            <button type="button" class="camera-btn" aria-label="Record video">
                <svg width="44" height="44" viewBox="0 0 44 44">
                    <rect width="44" height="44" rx="12" fill="#fff"/><circle cx="22" cy="22" r="10.500" fill="#fff" stroke="#249cf0" stroke-width="4"/>
                </svg>
            </button>
        </form>
        <div class="home-bar"></div>
    </div>
</body>
</html>
```

FILE: styles.css
```css
* {
    box-sizing: border-box;
}
body {
    margin: 0;
    font-family: Roboto, "Noto Sans CJK JP", sans-serif;
    color: #000;
}
h1, p {
    margin: 0;
    font-weight: normal;
}
button {
    border: none;
    padding: 0;
    background: none;
    font-family: inherit;
    cursor: pointer;
}
button svg {
    display: block;
}
a {
    color: #2a7ab5;
    text-decoration: none;
}
.sprites {
    position: absolute;
    width: 0;
    height: 0;
}
.phone {
    position: relative;
    display: flex;
    flex-direction: column;
    min-height: 100vh;
    overflow: hidden;
    background:
        radial-gradient(ellipse 66% 43% at 0% 28%, #d6d88c 0%, #d0d68c 30%, #c4d38c 50%, rgba(172, 202, 138, 0.75) 68%, rgba(150, 190, 135, 0.3) 86%, rgba(136, 184, 132, 0) 100%),
        radial-gradient(ellipse 66% 42% at 104% 82%, #dbddbb 0%, #d5dab5 32%, rgba(205, 215, 176, 0.75) 56%, rgba(190, 210, 170, 0.3) 80%, rgba(180, 205, 165, 0) 100%),
        radial-gradient(ellipse 62% 36% at 12% 92%, #6ba587 0%, #6fa888 55%, rgba(107, 165, 135, 0) 100%),
        #88b884;
}
.wallpaper {
    position: absolute;
    inset: 0;
    width: 100%;
    height: 100%;
    fill: none;
    stroke: #3c7a3c;
    stroke-opacity: 0.18;
    stroke-width: 5;
    stroke-linecap: round;
    stroke-linejoin: round;
}
.wallpaper .fill {
    fill: #3c7a3c;
    fill-opacity: 0.12;
}
.wallpaper .faint {
    opacity: 0.3;
}

/* header */
.top {
    position: relative;
    z-index: 2;
    background:
        linear-gradient(to bottom, rgba(240, 247, 240, 0) 45%, rgba(240, 246, 239, 0.8) 100%),
        linear-gradient(to right, #f8faef 0%, #fbfcf8 20%, #fefefe 45%, #fdfefd 70%, #eef4ed 90%, #ebf3eb 100%);
    box-shadow: 0 1px 2px rgba(0, 0, 0, 0.2);
}
.status {
    display: flex;
    justify-content: space-between;
    align-items: center;
    height: 154px;
    padding: 0 88px;
}
.status-left {
    display: flex;
    align-items: center;
    gap: 20px;
}
.status-right {
    display: flex;
    align-items: center;
    gap: 14px;
}
.signal {
    margin-left: 4px;
}
.clock {
    font-size: 35px;
    font-weight: 500;
    line-height: 40px;
}
.appbar {
    display: flex;
    align-items: center;
    height: 125px;
    padding: 0 49px 0 44px;
}
.avatar {
    display: flex;
    align-items: center;
    justify-content: center;
    width: 95px;
    height: 95px;
    margin: 0 26px 0 62px;
    border-radius: 50%;
    background: #0a0a0c;
}
.peer {
    flex: 1;
}
.peer-name {
    display: flex;
    align-items: center;
    gap: 12px;
    font-size: 40px;
    font-weight: 500;
    line-height: 48px;
    color: #1d2023;
}
.peer-status {
    font-size: 32px;
    line-height: 40px;
    color: #868a86;
}

/* messages */
.chat {
    position: relative;
    display: flex;
    flex-direction: column;
    gap: 16px;
    margin-top: -22px;
    padding: 0 25px;
}
.date {
    align-self: center;
    padding: 0 18px;
    border-radius: 28px;
    background: rgba(80, 146, 48, 0.65);
    color: #fff;
    font-size: 36px;
    font-weight: 500;
    line-height: 56px;
}
.date-low {
    background: rgba(66, 146, 88, 0.75);
}
.bubble {
    position: relative;
    display: flex;
    gap: 18px;
    padding: 16px 26px;
    border-radius: 38px;
    filter: drop-shadow(0 1px 1px rgba(40, 70, 40, 0.4));
}
.in {
    align-self: flex-start;
    border-bottom-left-radius: 0;
    background: #fff;
}
.out {
    align-self: flex-end;
    padding-right: 16px;
    border-bottom-right-radius: 0;
    background: #efffde;
}
.bubble::after {
    content: "";
    position: absolute;
    bottom: 0;
    width: 14px;
    height: 28px;
}
.out::after {
    left: calc(100% - 1px);
    background: #efffde;
    clip-path: path("M0 0H1C1 13 6 22 14 25V28H0Z");
}
.in::after {
    right: calc(100% - 1px);
    background: #fff;
    clip-path: path("M14 0H13C13 13 8 22 0 25V28H14Z");
}
.text {
    max-width: 741px;
    font-size: 41px;
    line-height: 48px;
}
.text p + p {
    margin-top: 48px;
}
.meta {
    display: flex;
    align-items: center;
    align-self: flex-end;
    gap: 9px;
    margin-bottom: -8px;
    font-size: 27px;
    line-height: 32px;
    color: #a3abb3;
}
.out .meta {
    color: #70b15c;
}
.read {
    width: 37px;
    height: 21px;
    color: #5fb054;
}
.long {
    flex-direction: column;
    gap: 0;
}
.long .meta {
    margin-top: -24px;
}
.emoji {
    width: 48px;
    height: 48px;
    vertical-align: top;
}
.arrow {
    display: inline-block;
    width: 41px;
    font-size: 30px;
    line-height: 40px;
    text-align: center;
}

/* bottom bar */
.composer {
    position: relative;
    display: flex;
    align-items: center;
    height: 100px;
    margin: 22px 16px 44px;
    padding: 0 7px 0 18px;
    border-radius: 50px;
    background: rgba(250, 252, 250, 0.88);
    box-shadow: inset 0 0 2px 2px rgba(255, 255, 255, 0.5), 0 1px 3px rgba(0, 0, 0, 0.15);
}
.menu-btn {
    display: flex;
    align-items: center;
    justify-content: center;
    gap: 13px;
    width: 185px;
    height: 72px;
    margin-right: 25px;
    border-radius: 36px;
    background: #249cf0;
    color: #fff;
    font-size: 35px;
    font-weight: 500;
}
.field {
    position: relative;
    flex: 1;
    display: flex;
    margin: 0 24px 0 26px;
}
/* text cursor */
.field::before {
    content: "";
    position: absolute;
    top: 0;
    bottom: 0;
    left: 0;
    width: 5px;
    background: #5b9ad2;
}
.field input {
    width: 100%;
    height: 54px;
    padding: 0 0 0 2px;
    border: none;
    outline: none;
    background: none;
    font-family: inherit;
    font-size: 40px;
}
.field input::placeholder {
    color: #868a86;
    opacity: 1;
}
.camera-btn {
    display: flex;
    align-items: center;
    justify-content: center;
    width: 85px;
    height: 85px;
    margin-left: 32px;
    border-radius: 50%;
    background: #249cf0;
}
.home-bar {
    position: relative;
    align-self: center;
    width: 242px;
    height: 8px;
    margin-bottom: 23px;
    border-radius: 4px;
    background: #36463a;
}
```
